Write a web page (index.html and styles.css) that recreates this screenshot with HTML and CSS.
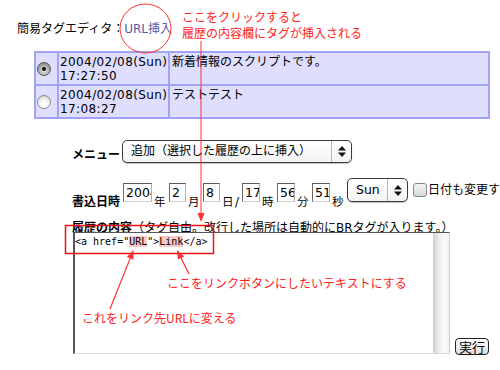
FILE: index.html
```html
<!DOCTYPE html>
<html lang="ja">
<head>
<meta charset="utf-8">
<title>簡易タグエディタ</title>
<link rel="stylesheet" href="styles.css">
</head>
<body>
<div class="page">
  <h1 class="title">簡易タグエディタ：<a class="link" href="#">URL挿入</a></h1>

  <table class="history">
    <tr>
      <td class="c-radio"><span class="radio checked"></span></td>
      <td class="c-date">2004/02/08(Sun)<br>17:27:50</td>
      <td class="c-text">新着情報のスクリプトです。</td>
    </tr>
    <tr>
      <td class="c-radio"><span class="radio"></span></td>
      <td class="c-date">2004/02/08(Sun)<br>17:08:27</td>
      <td class="c-text">テストテスト</td>
    </tr>
  </table>

  <div class="form">
    <div class="row menu-row">
      <span class="label">メニュー</span>
      <div class="select wide">
        <span class="sel-text">追加（選択した履歴の上に挿入）</span>
        <span class="sel-arrow"><svg width="8" height="11" viewBox="0 0 8 11"><polygon points="4,0 8,4.5 0,4.5" fill="#111"/><polygon points="0,6.5 8,6.5 4,11" fill="#111"/></svg></span>
      </div>
    </div>

    <div class="row date-row">
      <span class="label">書込日時</span>
      <input class="inp yr" value="2004"><span class="unit">年</span>
      <input class="inp sm" value="2"><span class="unit">月</span>
      <input class="inp sm" value="8"><span class="unit">日</span><span class="unit slash">/</span>
      <input class="inp md" value="17"><span class="unit">時</span>
      <input class="inp md" value="56"><span class="unit">分</span>
      <input class="inp md" value="51"><span class="unit">秒</span>
      <div class="select day">
        <span class="sel-text latin">Sun</span>
        <span class="sel-arrow"><svg width="8" height="11" viewBox="0 0 8 11"><polygon points="4,0 8,4.5 0,4.5" fill="#111"/><polygon points="0,6.5 8,6.5 4,11" fill="#111"/></svg></span>
      </div>
      <span class="check"></span><span class="check-text">日付も変更する</span>
    </div>

    <div class="content-label"><b>履歴の内容</b>（タグ自由。改行した場所は自動的にBRタグが入ります。）</div>

    <div class="editor-row">
      <div class="ta">
        <div class="code">&lt;a href="<span class="hl">URL</span>"&gt;<span class="hl">Link</span>&lt;/a&gt;</div>
        <div class="scroll"></div>
      </div>
      <button class="btn" type="button">実行</button>
    </div>
  </div>

  <div class="note note-top">ここをクリックすると<br>履歴の内容欄にタグが挿入される</div>
  <div class="note note-link">ここをリンクボタンにしたいテキストにする</div>
  <div class="note note-url">これをリンク先URLに変える</div>

  <svg class="overlay" width="500" height="370" viewBox="0 0 500 370">
    <ellipse cx="145.5" cy="28.5" rx="25.5" ry="24.5" fill="none" stroke="#ff3030" stroke-width="1"/>
    <line x1="201" y1="41" x2="201" y2="214" stroke="#ff3030" stroke-width="1"/>
    <polygon points="197.5,213 204.5,213 201,222" fill="#ff3030"/>
    <rect x="65.5" y="225.5" width="148" height="28" fill="none" stroke="#ee1111" stroke-width="1.5"/>
    <line x1="110" y1="309" x2="130.2" y2="258.4" stroke="#ff3030" stroke-width="1.2"/>
    <polygon points="133.5,250 133.4,259.7 126.9,257.1" fill="#ff3030"/>
    <line x1="189" y1="274" x2="181" y2="258" stroke="#ff3030" stroke-width="1.2"/>
    <polygon points="177,250 184.2,256.5 177.9,259.6" fill="#ff3030"/>
  </svg>
</div>
</body>
</html>
```
FILE: styles.css
```css
* { box-sizing: border-box; }
html, body { margin: 0; padding: 0; }
body {
  width: 500px;
  height: 370px;
  overflow: hidden;
  background: #fff;
  color: #000;
  font-family: "DejaVu Sans", "Noto Sans CJK JP", sans-serif;
  font-size: 12px;
}
.page { position: relative; width: 500px; height: 370px; overflow: hidden; }

.title {
  margin: 0;
  padding: 20px 0 0 17px;
  height: 38px;
  line-height: 18px;
  font-size: 12px;
  font-weight: normal;
  white-space: nowrap;
}
.link { color: #5a5aa8; text-decoration: none; }

.history {
  margin: 13px 0 0 34px;
  width: 456px;
  table-layout: fixed;
  border-collapse: separate;
  border-spacing: 2px;
  background: #a3a3f3;
}
.history td {
  background: #dedeff;
  height: 31px;
  padding: 2px 2px 0 2px;
  line-height: 14px;
  vertical-align: top;
  white-space: nowrap;
  overflow: hidden;
}
.history td.c-radio { width: 21px; padding: 0 0 0 1px; vertical-align: middle; }
.history td.c-date { width: 109px; padding-left: 1px; letter-spacing: 0.4px; }
.history td.c-text { padding-left: 2px; }

.radio {
  display: block;
  width: 14px;
  height: 14px;
  border-radius: 50%;
  border: 1px solid #8a8a8a;
  background: radial-gradient(circle at 50% 70%, #ffffff 0%, #f2f2f2 45%, #c9c9c9 100%);
  position: relative;
}
.radio.checked {
  border-color: #555;
  background: radial-gradient(circle at 50% 65%, #e6e6e6 0%, #a9a9a9 55%, #6c6c6c 100%);
}
.radio.checked::after {
  content: "";
  position: absolute;
  left: 4px;
  top: 4px;
  width: 4px;
  height: 4px;
  border-radius: 50%;
  background: #111;
}

.form { padding-left: 72px; }
.row { display: flex; align-items: flex-start; white-space: nowrap; }
.row > * { flex-shrink: 0; }
.label { font-weight: bold; line-height: 14px; }

.menu-row { margin-top: 21px; height: 23px; }
.menu-row .label { margin-top: 8px; margin-right: 2px; }

.select {
  display: flex;
  align-items: stretch;
  height: 23px;
  border: 1px solid #3a3a3a;
  border-radius: 5px;
  background: linear-gradient(#ffffff, #f3f3f3);
  box-shadow: 0 1px 1px rgba(0, 0, 0, 0.25);
}
.select.wide { width: 230px; }
.select.day { width: 61px; height: 24px; margin-left: 3px; }
.sel-text { flex: 1; padding-left: 8px; line-height: 21px; font-size: 12px; overflow: hidden; }
.sel-text.latin { padding-left: 8px; line-height: 22px; font-size: 12.5px; }
.sel-arrow {
  width: 20px;
  flex-shrink: 0;
  border-left: 1px solid #b8b8b8;
  display: flex;
  align-items: center;
  justify-content: center;
}

.date-row { margin-top: 15px; height: 31px; overflow: visible; }
.date-row .label { margin-top: 17px; }
.inp {
  margin: 5px 0 0 3px;
  height: 19px;
  padding: 0 0 0 2px;
  border: 1px solid;
  border-color: #5a5a5a #b0b0b0 #d0d0d0 #6a6a6a;
  background: #fff;
  font-family: "DejaVu Sans", sans-serif;
  font-size: 12.5px;
  line-height: 17px;
  color: #000;
  outline: none;
}
.inp.yr { width: 29px; }
.inp.sm { width: 17px; }
.inp.md { width: 18px; }
.unit {
  display: inline-block;
  width: 12px;
  margin: 17px 0 0 2px;
  line-height: 14px;
  font-size: 11.5px;
}
.unit.slash { width: 4px; margin-left: 1px; font-size: 12px; }

.check {
  margin: 5px 0 0 5px;
  width: 14px;
  height: 14px;
  border: 1px solid #8a8a8a;
  border-radius: 3px;
  background: linear-gradient(#f4f4f4, #d8d8d8);
}
.check-text { margin: 5px 0 0 1px; line-height: 14px; }

.content-label { margin-top: 12px; line-height: 14px; white-space: nowrap; }
.content-label b { font-weight: bold; }

.editor-row { display: flex; align-items: flex-end; margin-top: -3px; }
.ta {
  display: flex;
  margin-left: 1px;
  width: 377px;
  height: 122px;
  border-style: solid;
  border-width: 1px 1px 1px 2px;
  border-color: #555 #cfcfcf #dadada #555;
  background: #fff;
}
.code {
  flex: 1;
  padding: 2px 0 0 0;
  font-family: "DejaVu Sans Mono", monospace;
  font-size: 10px;
  line-height: 13px;
  white-space: pre;
}
.hl { background: #f9c8c8; }
.scroll {
  width: 16px;
  background: linear-gradient(to right, #cfcfcf, #ececec 35%, #fafafa 70%, #f2f2f2);
}
.btn {
  margin: 0 0 -1px 5px;
  height: 17px;
  padding: 0 3px;
  border: 1px solid #222;
  border-radius: 4px;
  background: linear-gradient(#ffffff, #dcdcdc);
  font-family: "Noto Sans CJK JP", sans-serif;
  font-size: 13px;
  line-height: 14px;
  color: #000;
}

.note {
  position: absolute;
  color: #ff2020;
  font-family: "Noto Sans CJK JP", sans-serif;
  font-size: 12px;
  line-height: 16px;
  white-space: nowrap;
}
.note-top { left: 182px; top: 9px; }
.note-link { left: 167px; top: 275px; }
.note-url { left: 82px; top: 310px; }

.overlay { position: absolute; left: 0; top: 0; pointer-events: none; }
```
